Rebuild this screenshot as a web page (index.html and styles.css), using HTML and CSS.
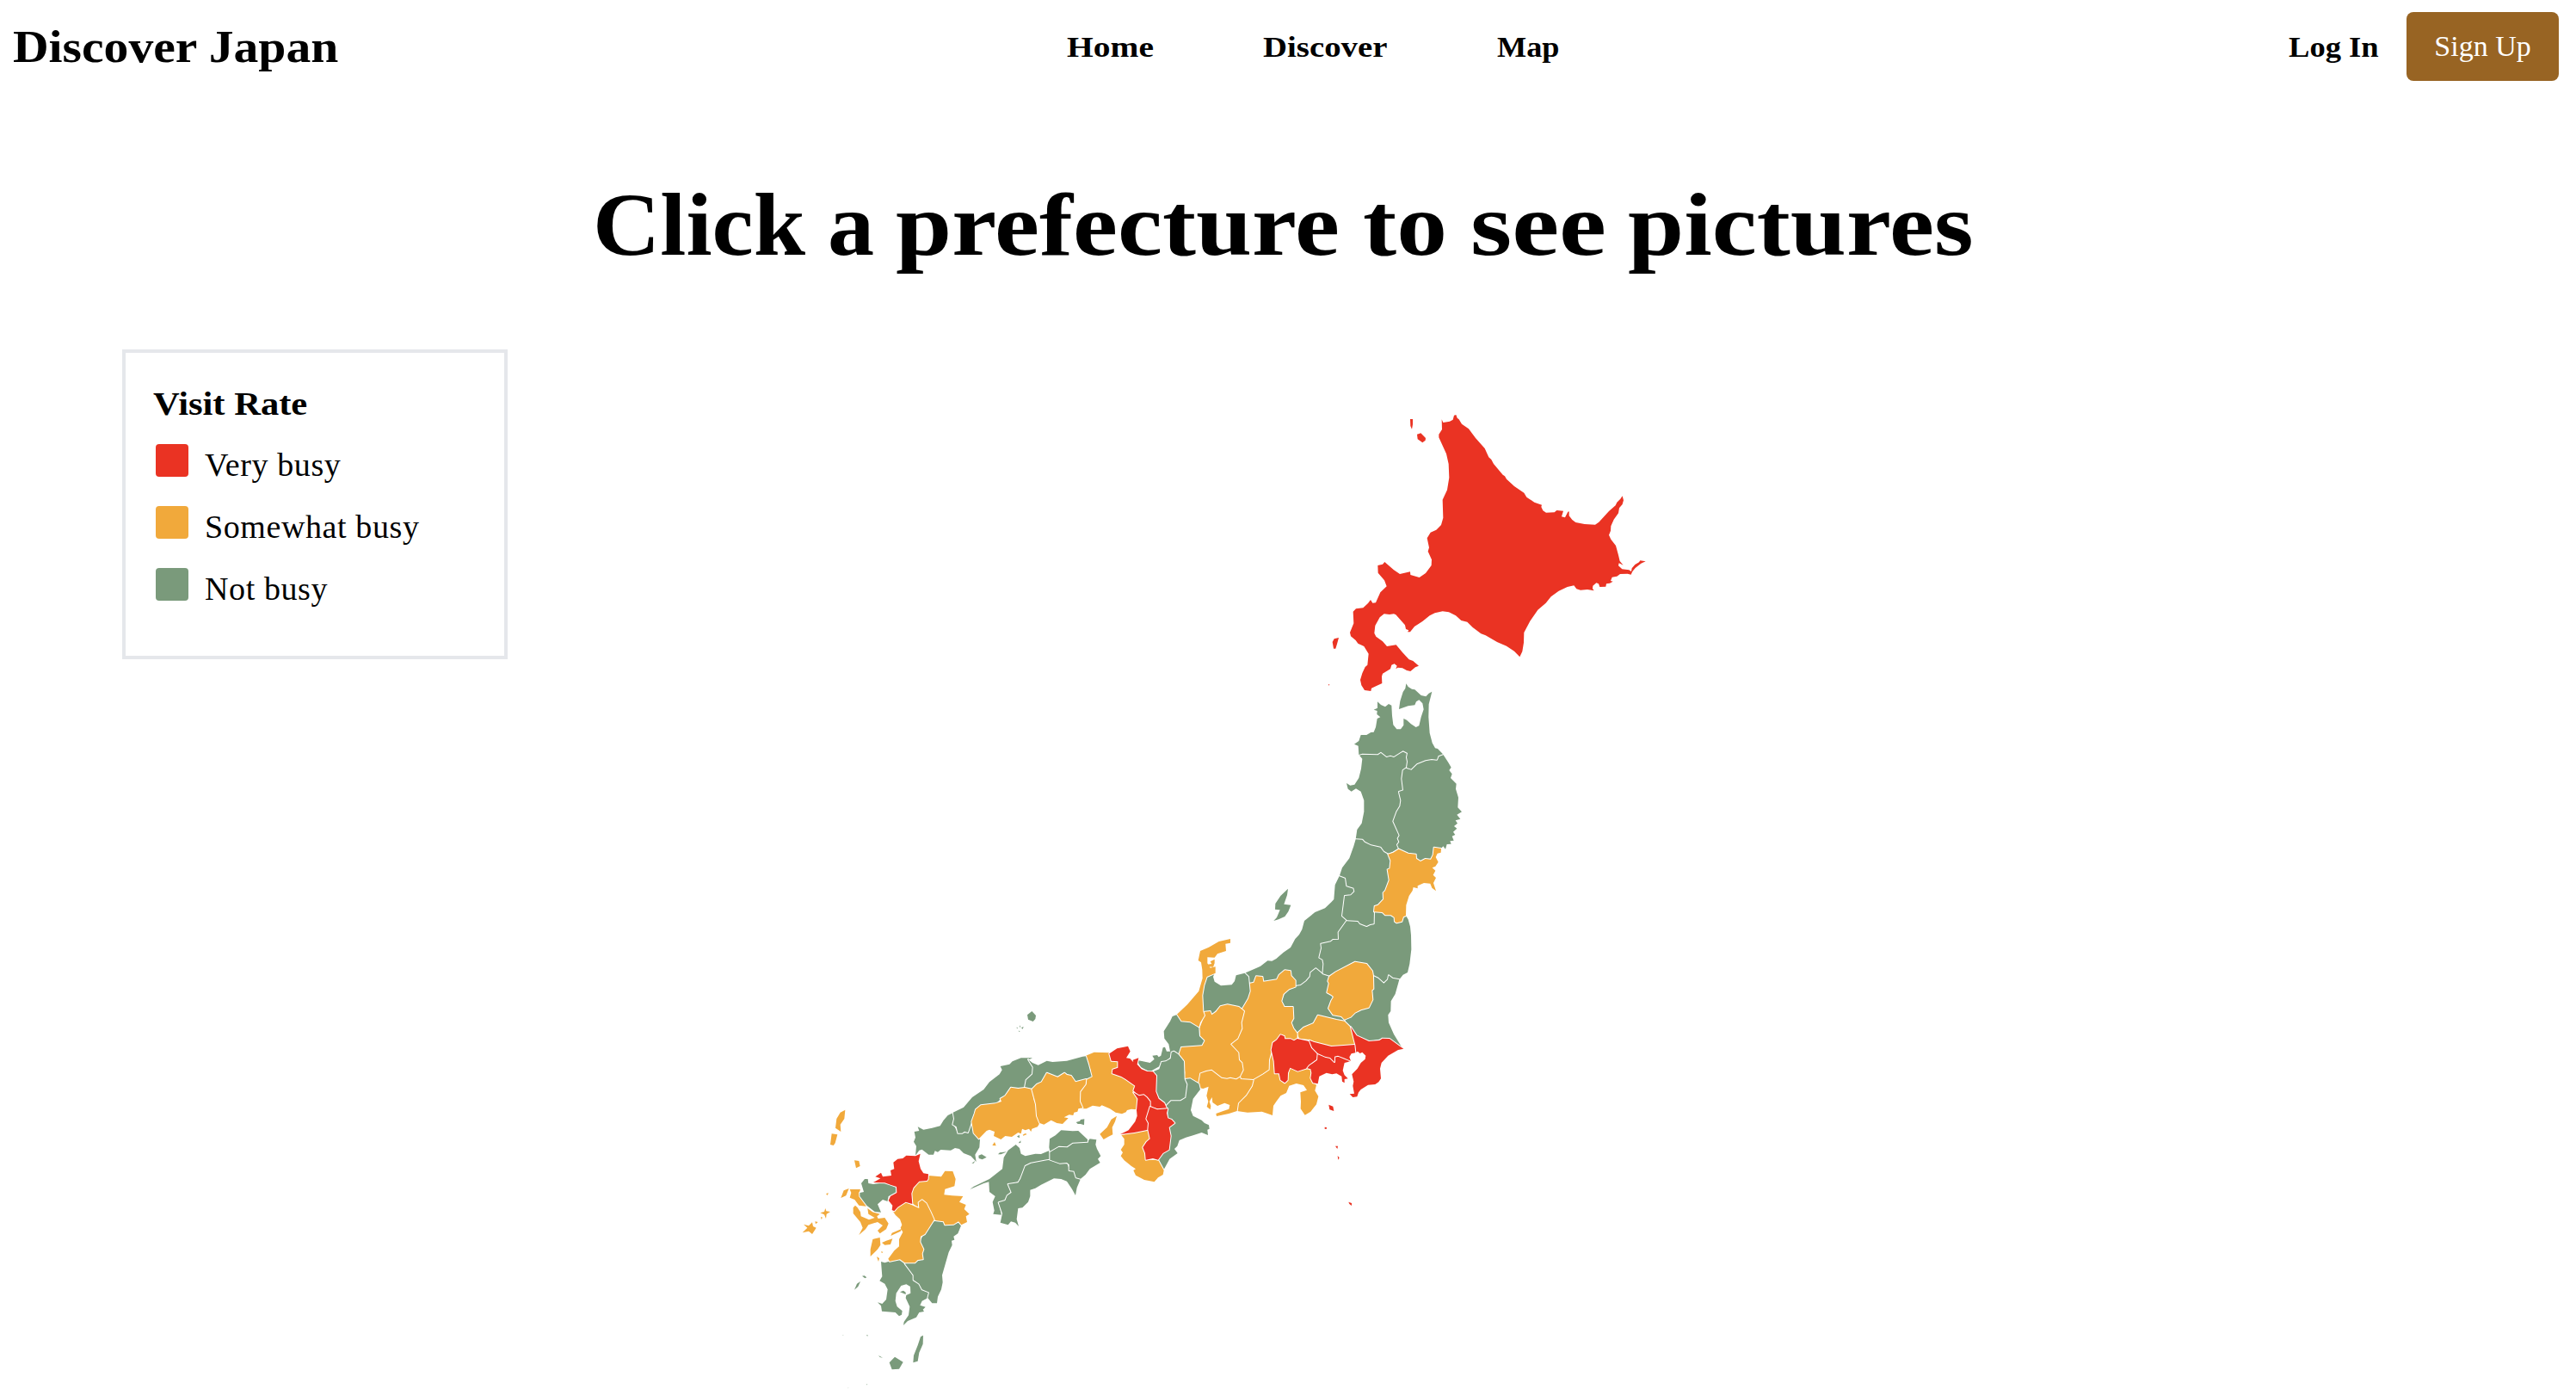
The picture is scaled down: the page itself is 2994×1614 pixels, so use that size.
FILE: index.html
```html
<!DOCTYPE html>
<html lang="en">
<head>
<meta charset="utf-8">
<title>Discover Japan</title>
<link rel="stylesheet" href="styles.css">
</head>
<body>
<header class="navbar">
  <a class="brand">Discover Japan</a>
  <nav class="links">
    <a class="link link-home">Home</a>
    <a class="link link-discover">Discover</a>
    <a class="link link-map">Map</a>
  </nav>
  <div class="account">
    <a class="login">Log In</a>
    <a class="signup">Sign Up</a>
  </div>
</header>
<main>
  <h1 class="title"><span class="word word-click">Click</span> <span class="word word-a">a</span> <span class="word word-prefecture">prefecture</span> <span class="word word-to">to</span> <span class="word word-see">see</span> <span class="word word-pictures">pictures</span></h1>
  <div class="content">
    <aside class="legend">
      <h2 class="legend-title">Visit Rate</h2>
      <ul class="legend-list">
        <li class="legend-item"><span class="swatch swatch-very"></span><span class="label">Very busy</span></li>
        <li class="legend-item"><span class="swatch swatch-some"></span><span class="label">Somewhat busy</span></li>
        <li class="legend-item"><span class="swatch swatch-not"></span><span class="label">Not busy</span></li>
      </ul>
    </aside>
    <svg class="map" viewBox="920 470 1000 1144" role="img" aria-label="Map of Japan">
      <!-- Hokkaido -->
      <g transform="translate(1530 470) scale(.33333)">
        <path class="very" d="M437,52 L442,63 L465,59 L476,53 L480,38 L487,36 L491,47 L497,52 L507,68 L531,85 L555,117 L587,153 L601,184 L610,192 L618,207 L650,245 L657,250 L663,260 L690,285 L724,308 L733,323 L760,341 L786,350 L784,357 L790,370 L801,377 L830,376 L838,369 L861,371 L855,391 L867,394 L877,374 L881,373 L881,388 L892,402 L904,411 L935,417 L972,419 L985,410 L1020,372 L1043,352 L1048,341 L1060,329 L1067,319 L1071,334 L1067,348 L1056,361 L1053,379 L1037,401 L1027,424 L1026,440 L1020,455 L1027,470 L1044,492 L1053,525 L1058,546 L1070,560 L1055,553 L1053,562 L1066,574 L1090,577 L1098,582 L1100,571 L1111,558 L1125,550 L1129,544 L1148,547 L1132,554 L1112,570 L1102,582 L1097,593 L1085,590 L1059,591 L1048,599 L1031,602 L1026,615 L1034,617 L1023,623 L1011,625 L1009,635 L988,636 L984,625 L976,622 L964,632 L963,642 L968,649 L945,645 L921,647 L907,643 L898,631 L875,636 L845,650 L818,670 L800,692 L772,716 L745,755 L724,795 L723,830 L718,861 L709,880 L690,860 L663,842 L630,828 L590,805 L574,799 L545,777 L526,758 L505,753 L486,736 L462,724 L440,721 L413,727 L395,736 L370,756 L342,774 L327,793 L318,793 L322,787 L312,783 L309,769 L277,733 L270,730 L255,732 L236,730 L221,742 L205,771 L202,797 L208,809 L231,826 L246,843 L278,838 L300,864 L323,889 L337,894 L357,911 L345,916 L328,930 L315,927 L300,919 L284,917 L277,922 L281,911 L272,904 L262,908 L258,922 L231,938 L228,948 L229,972 L211,980 L192,989 L190,999 L168,996 L157,979 L153,960 L160,937 L170,915 L178,908 L182,869 L166,843 L145,833 L137,822 L120,808 L117,795 L130,763 L128,722 L138,712 L163,709 L180,693 L189,681 L196,692 L207,691 L223,655 L245,634 L237,613 L215,587 L214,561 L231,557 L238,549 L270,577 L291,591 L327,583 L328,594 L359,603 L381,588 L401,561 L402,541 L389,512 L393,499 L386,466 L398,446 L418,437 L435,420 L442,395 L440,332 L456,298 L463,255 L461,207 L453,172 L427,115 L427,104 L438,87Z M327,51 L336,51 L336,70 L333,86 L328,75Z M351,104 L364,100 L381,117 L380,125 L370,133 L353,121Z M78,813 L72,835 L67,851 L60,851 L56,828 L62,817Z M41,976 L46,976 L44,980Z"/>
      </g>
      <!-- Aomori, Akita, Iwate -->
      <g transform="translate(1540 780) scale(.33333)">
        <path class="not" d="M118,291 L130,305 126,340 118,372 103,395 88,398 75,390 80,410 92,419 108,409 125,419 136,450 136,490 128,530 112,552 107,586 130,587 138,596 160,607 193,614 205,630 218,638 258,619 252,605 259,595 254,583 260,572 L238,523 250,490 262,470 265,450 260,430 258,420 273,415 268,375 272,345 285,336 288,315 285,300 288,285 272,277 260,284 240,297 215,297 195,281 170,289Z"/>
        <path class="not" d="M285,336 L300,341 320,322 350,308 390,308 395,295 411,289 430,318 440,335 433,345 443,358 438,372 458,392 456,410 465,440 463,475 477,490 460,500 472,515 455,520 462,530 450,540 460,548 447,560 454,570 443,575 449,590 436,592 440,602 425,603 420,620 412,610 405,618 380,614 377,640 369,656 350,654 333,663 318,653 317,638 290,635 258,619 252,605 259,595 254,583 260,572 238,523 250,490 262,470 265,450 260,430 258,420 273,415 268,375 272,345Z"/>
        <path class="not" d="M283,43 L290,54 303,62 313,64 335,84 352,88 362,77 373,71 362,115 361,160 365,215 374,250 384,268 393,270 411,289 395,295 390,308 372,306 350,310 320,322 300,341 285,336 288,315 285,300 288,285 272,277 260,284 240,297 228,293 215,297 195,281 183,289 130,287 118,291 116,260 102,254 118,243 125,222 145,222 160,213 170,212 177,195 182,165 193,160 181,150 182,138 170,134 183,128 183,106 195,117 210,124 222,114 232,119 234,155 238,187 250,202 264,202 274,188 274,165 285,170 300,184 317,195 328,190 335,160 344,133 340,112 328,100 318,106 313,118 290,121 258,132 262,104 272,72 280,60Z"/>
      </g>
      <!-- Niigata, Fukushima, Yamagata, Miyagi, Ibaraki, Gunma, Tochigi, Saitama -->
      <g transform="translate(1460 960) scale(.33333)">
        <path class="not" d="M291,172 L275,205 271,255 262,265 240,286 205,300 168,330 160,360 150,378 136,393 120,423 95,440 70,462 55,470 40,469 15,488 0,495 -40,512 -28,524 -22,548 0,570 137,558 155,555 175,540 188,525 190,510 208,496 225,510 232,517 235,480 232,465 220,458 228,425 226,410 260,403 268,396 288,395 287,370 317,328 300,313 309,243 330,241 343,228 340,215 316,208 312,180Z M111,218 L108,240 97,272 121,275 112,298 100,315 78,325 61,330 72,318 83,292 66,290 67,270 85,243Z"/>
        <path class="not" d="M317,328 L355,330 385,348 410,340 411,298 440,300 450,310 470,310 482,318 483,332 490,337 508,332 513,316 522,312 530,325 537,350 540,380 541,430 535,480 528,510 512,518 499,535 475,530 462,520 459,535 445,548 425,530 408,522 L300,560 255,524 232,517 235,480 232,465 220,458 228,425 226,410 260,403 268,396 288,395 287,370Z"/>
        <path class="not" d="M347,46 L370,47 378,56 400,67 433,74 445,90 460,98 469,120 466,148 458,151 464,188 450,225 443,232 444,255 425,275 413,279 411,298 410,340 397,342 385,348 362,339 355,330 317,328 300,313 309,243 330,241 343,228 340,215 316,208 312,180 291,172 300,145 325,112 340,70Z"/>
        <path class="some" d="M460,98 L478,92 497,80 530,95 557,98 558,113 573,123 590,114 609,116 617,100 620,74 645,78 644,92 632,95 626,108 635,125 625,140 614,145 625,155 617,170 627,180 618,198 627,226 613,215 607,200 585,198 563,208 563,217 548,213 545,225 533,243 523,275 522,312 513,316 508,332 490,337 483,332 482,318 470,310 450,310 440,300 411,298 413,279 425,275 444,255 443,232 450,225 464,188 458,151 466,148 469,120Z"/>
        <path class="not" d="M408,522 L425,530 445,548 459,535 462,520 475,530 499,535 485,585 470,610 469,645 460,658 462,685 480,725 508,771 480,752 445,740 393,750 350,730 330,702 308,680 308,674 330,665 345,650 365,640 393,632 406,605 403,572 409,570Z"/>
        <path class="not" d="M137,558 L155,555 175,540 188,525 190,510 208,496 225,510 232,517 255,524 250,540 254,548 247,575 270,595 252,635 268,655 300,663 308,678 280,675 215,659 204,685 165,702 143,722 130,710 122,683 130,670 125,650 130,632 98,630 88,610 100,582 115,570Z"/>
        <path class="some" d="M255,524 L278,508 345,473 385,480 405,505 408,522 409,567 403,572 406,605 393,632 365,640 345,650 330,665 308,674 297,663 268,658 252,635 262,608 270,595 262,588 247,580 254,548 250,540Z"/>
        <path class="some" d="M143,722 L165,702 200,687 215,659 280,675 308,680 330,702 343,742 343,765 320,764 262,768 245,762 200,752 185,744 150,740Z"/>
      </g>
      <!-- Chubu and southern Kanto -->
      <g transform="translate(1340 1080) scale(.33333)">
        <path class="very" d="M690,340 L710,370 753,390 790,387 800,380 825,381 862,408 874,416 855,420 820,440 797,465 792,485 795,520 787,532 775,540 750,542 725,558 717,568 712,583 697,585 686,574 702,572 697,545 700,530 694,505 713,485 725,465 740,452 742,440 730,428 722,432 714,425 706,430 705,400Z"/>
        <path class="some" d="M338,188 L352,185 360,163 382,165 385,182 432,175 440,158 460,142 480,145 482,162 497,178 497,200 475,208 455,225 448,250 458,270 488,270 490,310 482,325 490,345 503,362 503,381 492,388 480,382 460,382 458,372 445,367 432,385 418,395 413,420 415,430 408,455 407,490 350,525 306,522 303,512 314,490 310,465 300,455 298,430 270,400 295,380 310,345 308,325 318,290 310,274 330,240 335,215Z"/>
        <path class="some" d="M350,525 L385,505 407,490 408,455 415,430 422,460 425,502 440,502 445,525 460,535 470,525 471,500 478,482 505,494 538,484 550,487 553,500 550,518 558,535 570,542 565,562 577,582 570,610 550,635 530,647 515,625 516,600 514,568 537,560 525,543 500,537 475,545 465,570 445,580 430,600 420,615 417,648 400,642 380,635 330,638 293,633 297,605 325,577 345,545Z"/>
        <path class="some" d="M157,533 L163,500 185,492 205,488 240,515 270,515 290,520 303,512 306,522 350,525 345,545 325,577 297,605 293,633 265,642 222,651 220,642 245,633 265,626 268,612 250,605 225,615 208,603 206,585 197,600 202,615 200,628 188,618 193,600 187,580 194,548 175,555 160,552Z"/>
        <path class="not" d="M188,165 L215,153 210,165 215,182 237,196 275,193 285,180 290,160 320,152 333,165 338,215 330,240 310,274 300,272 260,262 235,268 205,298 200,285 180,292 175,285 172,230 178,195Z"/>
        <path class="some" d="M180,287 L200,285 205,298 220,287 235,268 260,262 300,270 318,285 308,325 310,345 295,380 285,388 270,400 298,430 300,455 310,465 314,490 303,512 290,520 270,515 258,518 240,515 205,488 185,492 163,500 157,533 130,520 110,520 112,498 108,475 108,455 90,435 97,408 130,407 170,403 178,388 165,372 162,345 172,320Z"/>
        <path class="some" d="M270,33 L270,47 253,50 255,75 225,85 215,98 190,97 190,118 200,134 218,130 218,152 188,165 178,195 172,230 175,285 180,300 165,325 160,343 148,335 130,325 98,322 82,298 120,262 160,215 173,170 172,140 168,115 158,108 165,75 195,62 230,42Z"/>
        <path class="some flat" d="M200,112 L215,104 215,118 210,131 195,130 190,122 205,120Z"/>
        <path class="not" d="M82,298 L98,322 130,325 160,343 162,372 178,388 170,403 97,408 88,435 75,425 65,430 62,445 45,460 28,462 22,478 0,490 -10,497 -42,480 -57,455 -35,460 -10,465 5,452 -2,440 15,438 20,445 28,440 35,412 42,410 48,425 60,425 55,400 40,380 38,355 60,320 68,303Z"/>
        <path class="very" d="M503,381 L520,385 545,390 555,412 575,432 573,455 545,475 538,484 505,494 478,482 471,500 470,525 460,535 445,525 440,502 425,502 422,460 413,420 418,395 432,385 445,367 458,372 460,382 480,382 492,388Z"/>
        <path class="very" d="M575,432 L600,443 618,447 630,460 633,443 645,440 665,448 690,458 680,462 668,465 665,478 662,492 668,508 680,520 668,522 668,535 660,530 658,512 640,502 625,505 605,500 580,512 575,538 558,535 550,518 553,500 550,487 538,484 545,475 573,455Z"/>
        <path class="very" d="M545,386 L560,392 622,408 665,405 703,402 706,430 692,433 685,445 690,458 665,448 645,440 633,443 633,462 618,447 600,443 575,432 555,412Z M613,611 L628,617 631,633 616,628Z M599,689 L606,690 605,696 599,695Z M636,755 L645,755 643,765Z M644,789 L650,796 646,803Z M682,950 L693,954 693,963 685,957Z"/>
      </g>
      <!-- Kinki -->
      <g transform="translate(1240 1180) scale(.33333)">
        <path class="not" d="M410,222 L430,220 460,238 465,258 440,290 432,330 440,350 470,365 480,375 495,382 497,395 490,398 492,417 470,408 440,418 415,425 392,435 385,455 375,465 386,480 358,500 350,515 338,537 318,503 335,480 356,468 362,420 356,390 375,375 352,358 352,328 345,312 362,297 395,295 412,285 418,240Z"/>
        <path class="not" d="M365,128 L373,125 388,135 408,160 410,222 418,240 412,285 395,295 362,295 345,312 320,295 310,275 312,210 300,196 322,187 330,162 345,160 362,150Z"/>
        <path class="some" d="M66,140 L95,128 148,130 155,158 178,160 178,182 160,188 158,200 190,215 238,245 232,262 230,270 245,285 243,328 225,326 210,330 206,337 192,343 170,338 150,325 122,313 115,318 90,314 68,325 50,325 42,295 45,260 68,238 68,220 85,212 83,190 72,165Z M174,350 L168,370 158,390 160,415 145,422 128,432 115,413 140,390 155,362Z"/>
        <path class="some" d="M190,417 L235,408 283,398 290,430 265,460 273,480 275,503 318,503 338,540 335,555 318,565 305,580 270,573 240,557 232,540 240,535 225,525 200,505 188,490 195,478 188,468 200,450 200,430Z"/>
        <path class="very" d="M148,133 L175,115 213,107 221,125 207,148 220,150 232,163 230,155 250,148 245,170 260,187 280,195 300,196 312,210 310,265 320,290 340,305 350,328 322,326 290,318 288,300 275,280 250,280 232,262 238,245 205,222 190,213 158,202 160,188 178,182 178,160 155,158Z"/>
        <path class="very" d="M232,268 L252,280 268,277 278,285 290,300 290,320 277,360 285,375 283,398 235,408 186,414 215,400 238,370 245,350 243,330 247,290Z"/>
        <path class="very" d="M290,318 L315,328 352,325 348,340 352,358 365,363 376,375 356,390 362,420 356,468 335,480 318,503 300,498 275,503 273,480 265,460 278,440 290,430 283,398 285,375 277,360Z"/>
      </g>
      <!-- Chugoku and Shikoku -->
      <g transform="translate(1040 1170) scale(.33333)">
        <path class="not" d="M205,368 L205,410 220,440 255,438 268,400 275,440 297,462 295,490 280,515 284,540 265,520 240,510 225,495 210,492 195,500 160,498 150,506 140,502 135,515 118,515 95,497 85,500 72,518 75,485 66,470 72,455 68,435 85,432 80,418 100,428 130,422 158,415 170,395 185,378Z M292,518 L303,514 320,524 305,532 293,528Z M268,545 L280,537 275,545Z M360,514 L366,508 392,505 370,514Z"/>
        <path class="not" d="M368,207 L400,200 410,190 440,178 480,178 465,185 482,210 480,235 458,255 453,282 405,281 385,310 370,320 355,335 300,343 280,370 268,400 255,438 243,434 235,440 220,440 215,418 202,410 207,390 203,368 240,350 270,315 310,288 330,262 365,235 374,220Z M478,15 L492,30 490,42 482,51 465,44 462,28Z M423,71 L429,73 428,76Z M436,64 L439,71 435,70Z M441,73 L449,69 446,77Z M431,83 L437,84 434,87Z"/>
        <path class="not" d="M465,183 L480,195 500,203 530,188 550,192 600,188 655,173 666,172 675,200 686,242 665,252 630,260 615,240 592,230 568,245 530,230 518,260 495,270 478,287 453,282 458,255 480,235 482,210Z"/>
        <path class="some" d="M478,287 L453,282 430,285 405,281 385,310 368,320 372,330 350,337 300,343 282,358 278,372 268,400 275,440 293,460 320,432 330,428 348,435 345,450 370,462 385,450 408,453 430,438 440,442 444,425 455,430 468,425 475,435 478,425 498,418 505,405 495,380 492,340 485,325Z M340,483 L348,471 353,484Z M446,446 L455,441 461,444 448,449Z"/>
        <path class="some" d="M530,230 L568,245 592,230 600,237 615,240 630,262 667,252 665,270 646,295 645,330 655,352 640,355 637,365 625,368 622,378 608,376 590,385 605,388 585,408 565,405 545,395 520,410 505,405 495,380 492,340 478,287 495,270 512,262Z"/>
        <path class="not" d="M422,480 L435,492 440,512 455,520 490,512 510,513 540,500 541,533 475,545 455,560 430,610 398,618 405,645 385,675 362,682 372,725 343,722 347,710 341,680 350,660 330,645 328,610 310,615 262,636 275,626 330,600 375,565 380,525 395,500Z M426,452 L434,446 435,457Z M431,475 L439,466 439,474Z"/>
        <path class="not" d="M541,533 L600,543 608,565 625,572 632,595 648,599 635,630 630,657 618,635 600,608 580,600 555,598 510,620 490,632 472,638 472,660 465,680 445,700 430,702 425,740 432,765 420,752 405,748 395,760 368,752 375,720 362,682 385,675 392,658 407,647 395,618 430,613 438,600 455,555 475,545 530,535Z"/>
        <path class="not" d="M541,503 L572,485 600,487 625,472 672,470 680,460 703,463 700,480 705,495 718,520 708,530 716,543 680,565 665,585 648,599 632,595 625,572 608,570 608,550 600,543 575,545 541,533Z"/>
        <path class="not" d="M540,460 L560,448 580,430 620,433 640,432 672,462 672,470 620,473 600,487 572,485 541,503 538,490Z M632,402 L645,398 648,393 661,391 660,412 648,408 638,408Z"/>
      </g>
      <!-- Kyushu -->
      <g transform="translate(920 1280) scale(.33333)">
        <path class="not" d="M312,558 L325,562 340,557 378,550 395,563 425,610 455,655 478,665 475,685 455,695 448,710 467,716 458,725 462,732 445,735 435,752 405,765 390,780 392,768 408,745 412,715 398,685 400,675 415,668 414,645 400,637 382,642 365,668 362,695 368,715 386,730 384,743 375,748 362,735 315,731 312,712 300,700 316,705 330,690 335,655 325,635 307,625 316,610Z M378,664 L390,659 398,665 398,672Z M219,656 L228,635 240,627 232,645Z M246,608 L254,607 262,613 256,616Z M459,815 L458,845 445,875 440,905 424,910 426,885 440,850 450,820Z M360,890 L389,908 375,932 350,934 341,910Z M303,885 L318,893 308,891Z M261,813 L267,815 264,818Z M261,984 L265,987 262,988Z M178,814 L181,814 180,816Z M196,998 L199,998 198,1000Z"/>
        <path class="not" d="M495,418 L520,415 530,418 535,430 565,428 582,418 592,430 580,460 565,470 568,482 558,485 560,500 548,525 525,605 527,630 522,655 510,680 507,703 490,703 475,685 480,665 455,655 445,635 425,622 425,605 395,565 420,562 458,550 455,530 460,515 448,485 465,455Z"/>
        <path class="some" d="M477,258 L522,262 535,242 562,243 572,270 568,295 535,305 532,325 560,328 598,330 585,350 608,360 602,375 620,392 608,400 612,420 592,430 582,418 565,428 535,430 530,418 505,415 495,412 485,385 470,355 455,343 443,352 445,372 421,355 418,320 425,300 440,280 472,276Z"/>
        <path class="some" d="M352,380 L370,368 398,350 418,360 445,372 443,352 455,343 470,355 485,385 497,412 465,462 450,470 448,490 460,515 455,530 458,550 440,552 430,562 395,562 378,550 342,557 337,548 358,520 375,505 375,480 388,455 380,440 385,430 378,410 362,395Z M283,480 L308,474 310,500 300,515 275,540 275,515Z M315,492 L330,485 352,478 345,498 325,500Z M346,468 L350,458 385,443 380,452Z M297,541 L306,546 303,558Z M312,523 L319,524 315,529Z"/>
        <path class="some" d="M203,306 L240,306 235,320 243,340 262,350 260,365 235,362 220,342 203,335 208,318Z M222,362 L230,370 240,385 242,400 270,412 290,405 268,392 265,372 282,385 308,392 298,400 302,408 325,405 338,425 330,445 308,460 300,450 318,432 300,420 268,430 258,445 235,465 248,440 240,420 215,390 215,370Z M170,38 L187,29 184,60 170,80 172,105 153,92 157,60Z M140,112 L160,115 152,145 146,153 135,150Z M219,205 L235,207 239,225 225,232Z M172,336 L182,310 200,303 190,328Z M38,457 L55,440 42,428 60,433 72,421 75,435 86,440 72,462 60,452Z M100,388 L114,384 118,372 121,382 135,384 122,392 120,408 114,394Z M82,418 L92,420 84,427Z M102,402 L108,404 104,411Z M120,322 L128,318 126,327Z"/>
        <path class="not" d="M285,288 L325,283 345,290 365,295 365,320 338,330 335,348 318,342 300,358 312,386 290,384 262,362 238,330 238,318 252,315 243,285 255,270 266,270 268,285Z"/>
        <path class="very" d="M370,200 L388,198 400,188 432,190 449,182 443,208 450,235 460,250 477,253 476,270 472,276 445,278 425,300 418,320 421,357 398,350 370,368 358,382 350,378 352,362 338,345 345,330 367,318 366,297 345,290 325,283 285,282 310,268 292,262 312,248 318,262 348,258 345,240 358,235 355,212Z"/>
      </g>
    </svg>
  </div>
</main>
</body>
</html>
```
FILE: styles.css
```css
* {
  box-sizing: border-box;
  margin: 0;
  padding: 0;
}

body {
  height: 1614px;
  overflow: hidden;
  background: #fff;
  color: #000;
  font-family: "Liberation Serif", serif;
}

.navbar {
  display: grid;
  grid-template-columns: 1225px 1fr auto;
  align-items: center;
  height: 108px;
  padding: 0 20px 0 15px;
  font-size: 34.5px;
  font-weight: 700;
}

/* Bold headings and links are set slightly extended */
.brand,
.link,
.login,
.legend-title {
  display: block;
  white-space: nowrap;
  transform-origin: left center;
}

.brand {
  font-size: 52px;
  transform: scaleX(1.108);
}

.links {
  display: flex;
  gap: 128px;
}

.link-home {
  width: 100px;
  transform: scaleX(1.145);
}

.link-discover {
  width: 144px;
  transform: scaleX(1.125);
}

.link-map {
  width: 72px;
  transform: scaleX(1.05);
}

.account {
  display: flex;
  align-items: center;
  gap: 32px;
}

.login {
  width: 105px;
  transform: scaleX(1.06);
}

.signup {
  display: flex;
  align-items: center;
  justify-content: center;
  width: 177px;
  height: 80px;
  border-radius: 8px;
  background: #986423;
  color: #fff;
  font-size: 34px;
  font-weight: 400;
}

.title {
  padding: 93px 0 0 689px;
  font-size: 104px;
  line-height: 120px;
  white-space: nowrap;
}

.word {
  display: inline-block;
  transform-origin: left center;
}

.word-click { width: 247px; transform: scaleX(1.043); }
.word-a { width: 53px; transform: scaleX(1.04); }
.word-prefecture { width: 517px; transform: scaleX(1.126); }
.word-to { width: 99px; transform: scaleX(1.13); }
.word-see { width: 157px; transform: scaleX(1.19); }
.word-pictures { width: 403px; transform: scaleX(1.127); }

.content {
  display: grid;
  grid-template-columns: 448px 1000px;
  column-gap: 330px;
  align-items: start;
  padding: 85px 0 0 142px;
}

.legend {
  height: 360px;
  padding: 31px 32px 0;
  border: 4px solid #e5e7eb;
}

.legend-title {
  margin-bottom: 2px;
  font-size: 38px;
  line-height: 56px;
  transform: scaleX(1.12);
}

.legend-list {
  display: grid;
  grid-auto-rows: 72px;
  padding-left: 3px;
  list-style: none;
}

.legend-item {
  display: flex;
  align-items: center;
  gap: 19px;
  font-size: 38px;
}

.swatch {
  width: 38px;
  height: 38px;
  border-radius: 4px;
}

.label {
  padding-top: 9px;
  letter-spacing: .6px;
}

.swatch-very { background: #ea3323; }
.swatch-some { background: #f1a93b; }
.swatch-not { background: #7a9a7b; }

.map {
  display: block;
  width: 1000px;
  height: 1144px;
  margin-top: 64px;
}

.map path {
  stroke: #fff;
  stroke-width: 6;
  stroke-linejoin: round;
  paint-order: stroke;
}

.map .flat { stroke: none; }
.very { fill: #ea3323; }
.some { fill: #f1a93b; }
.not { fill: #7a9a7b; }
```
